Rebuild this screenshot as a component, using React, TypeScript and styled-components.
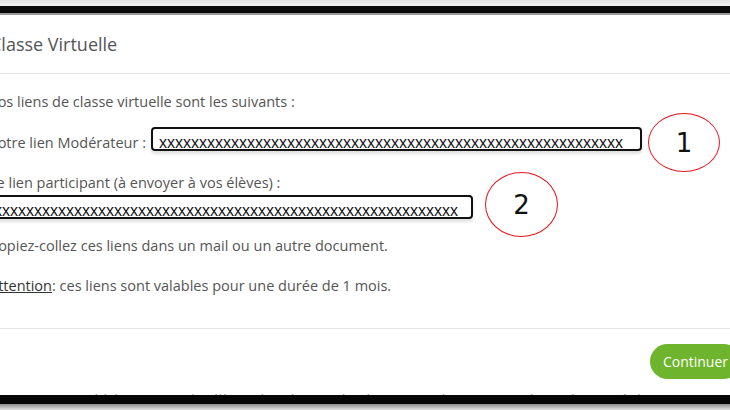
import styled, { createGlobalStyle } from "styled-components";

const GlobalStyle = createGlobalStyle`
  body {
    margin: 0;
    background: #fff;
    overflow: hidden;
  }
`;

const XS = "x".repeat(58);

const Screen = styled.div`
  width: 730px;
  height: 410px;
  overflow: hidden;
  display: flex;
  flex-direction: column;
  font-family: "Open Sans", "Liberation Sans", sans-serif;
`;

const Edge = styled.div<{ $h: number; $bg: string }>`
  flex: none;
  height: ${(p) => p.$h}px;
  background: ${(p) => p.$bg};
`;

const Modal = styled.div`
  flex: 1;
  width: 780px;
  margin-left: -24px;
  background: #fff;
  display: flex;
  flex-direction: column;
`;

const Header = styled.div`
  box-sizing: border-box;
  height: 59px;
  padding: 0 16px;
  display: flex;
  align-items: center;
  border-bottom: 1px solid #e6e6e6;
`;

const Title = styled.h4`
  margin: 0 0 0 -2px;
  font-size: 18px;
  font-weight: 400;
  color: #555;
`;

const Body = styled.div`
  padding: 19px 16px 33px 13px;
  border-bottom: 1px solid #e6e6e6;
  color: #555;
  font-size: 14.5px;
  line-height: 18px;
`;

const Text = styled.p<{ $mt?: number }>`
  margin: ${(p) => p.$mt ?? 0}px 0 0;
  white-space: nowrap;
`;

const LinkRow = styled.div<{ $mt: number }>`
  display: flex;
  align-items: baseline;
  margin-top: ${(p) => p.$mt}px;
`;

const Label = styled.span`
  margin-right: 5px;
  white-space: nowrap;
`;

const LinkBox = styled.div<{ $w: number; $ml?: number }>`
  box-sizing: border-box;
  flex: none;
  width: ${(p) => p.$w}px;
  margin-left: ${(p) => p.$ml ?? 0}px;
  padding: 7px 0 0 6px;
  border: 2px solid #111;
  border-radius: 4px;
  box-shadow: 0 3px 3px rgba(0, 0, 0, 0.12);
  font-family: "Liberation Sans", Arial, sans-serif;
  font-size: 16px;
  line-height: 13px;
  color: #111;
  white-space: nowrap;
  overflow: hidden;
`;

const Mark = styled.span<{ $w: number; $h: number; $ml: number; $mt: number }>`
  box-sizing: border-box;
  flex: none;
  align-self: flex-start;
  width: ${(p) => p.$w}px;
  height: ${(p) => p.$h}px;
  margin: ${(p) => p.$mt}px 0 ${(p) => 24 - p.$h - p.$mt}px ${(p) => p.$ml}px;
  border: 1.5px solid #e5141c;
  border-radius: 50%;
  display: flex;
  align-items: center;
  justify-content: center;
  font-family: "DejaVu Sans", sans-serif;
  font-size: 26px;
  color: #111;
`;

const Underlined = styled.span`
  text-decoration: underline;
  color: #333;
`;

const Footer = styled.div`
  flex: 1;
  padding: 15px 15px 0;
  display: flex;
  justify-content: flex-end;
  align-items: flex-start;
`;

const ContinueButton = styled.button`
  height: 35px;
  padding: 0 13px;
  border: none;
  border-radius: 18px;
  background: #6eb42c;
  color: #fff;
  font-family: "Open Sans", sans-serif;
  font-size: 14px;
`;

const Remnant = styled.div`
  flex: none;
  height: 2px;
  overflow: hidden;
  padding-left: 8px;
  font-family: "Open Sans", sans-serif;
  font-size: 13px;
  line-height: 13px;
  color: #999;
  white-space: nowrap;
`;

export default function App() {
  return (
    <>
      <GlobalStyle />
      <Screen>
        <Edge $h={6} $bg="linear-gradient(#e2e2e2, #f2f2f2)" />
        <Edge $h={7} $bg="#0a0a0a" />
        <Edge $h={2} $bg="#999" />
        <Modal>
          <Header>
            <Title>Classe Virtuelle</Title>
          </Header>
          <Body>
            <Text>Vos liens de classe virtuelle sont les suivants :</Text>
            <LinkRow $mt={16}>
              <Label>Votre lien Modérateur :</Label>
              <LinkBox $w={491}>{XS}</LinkBox>
              <Mark $w={72} $h={59} $ml={6} $mt={-14}>1</Mark>
            </LinkRow>
            <Text $mt={22}>Le lien participant (à envoyer à vos élèves) :</Text>
            <LinkRow $mt={3}>
              <LinkBox $w={487} $ml={-3}>{XS}</LinkBox>
              <Mark $w={73} $h={65} $ml={12} $mt={-23}>2</Mark>
            </LinkRow>
            <Text $mt={18}>Copiez-collez ces liens dans un mail ou un autre document.</Text>
            <Text $mt={22}>
              <Underlined>Attention</Underlined>: ces liens sont valables pour une durée de 1 mois.
            </Text>
          </Body>
          <Footer>
            <ContinueButton>Continuer</ContinueButton>
          </Footer>
        </Modal>
        <Remnant>
          ce permettre d'échanger avec les élèves, de présenter des documents, d'animer une séance de cours à distance
        </Remnant>
        <Edge $h={9} $bg="#050505" />
        <Edge $h={6} $bg="linear-gradient(#8a8a8a, #e4e4e4)" />
      </Screen>
    </>
  );
}
